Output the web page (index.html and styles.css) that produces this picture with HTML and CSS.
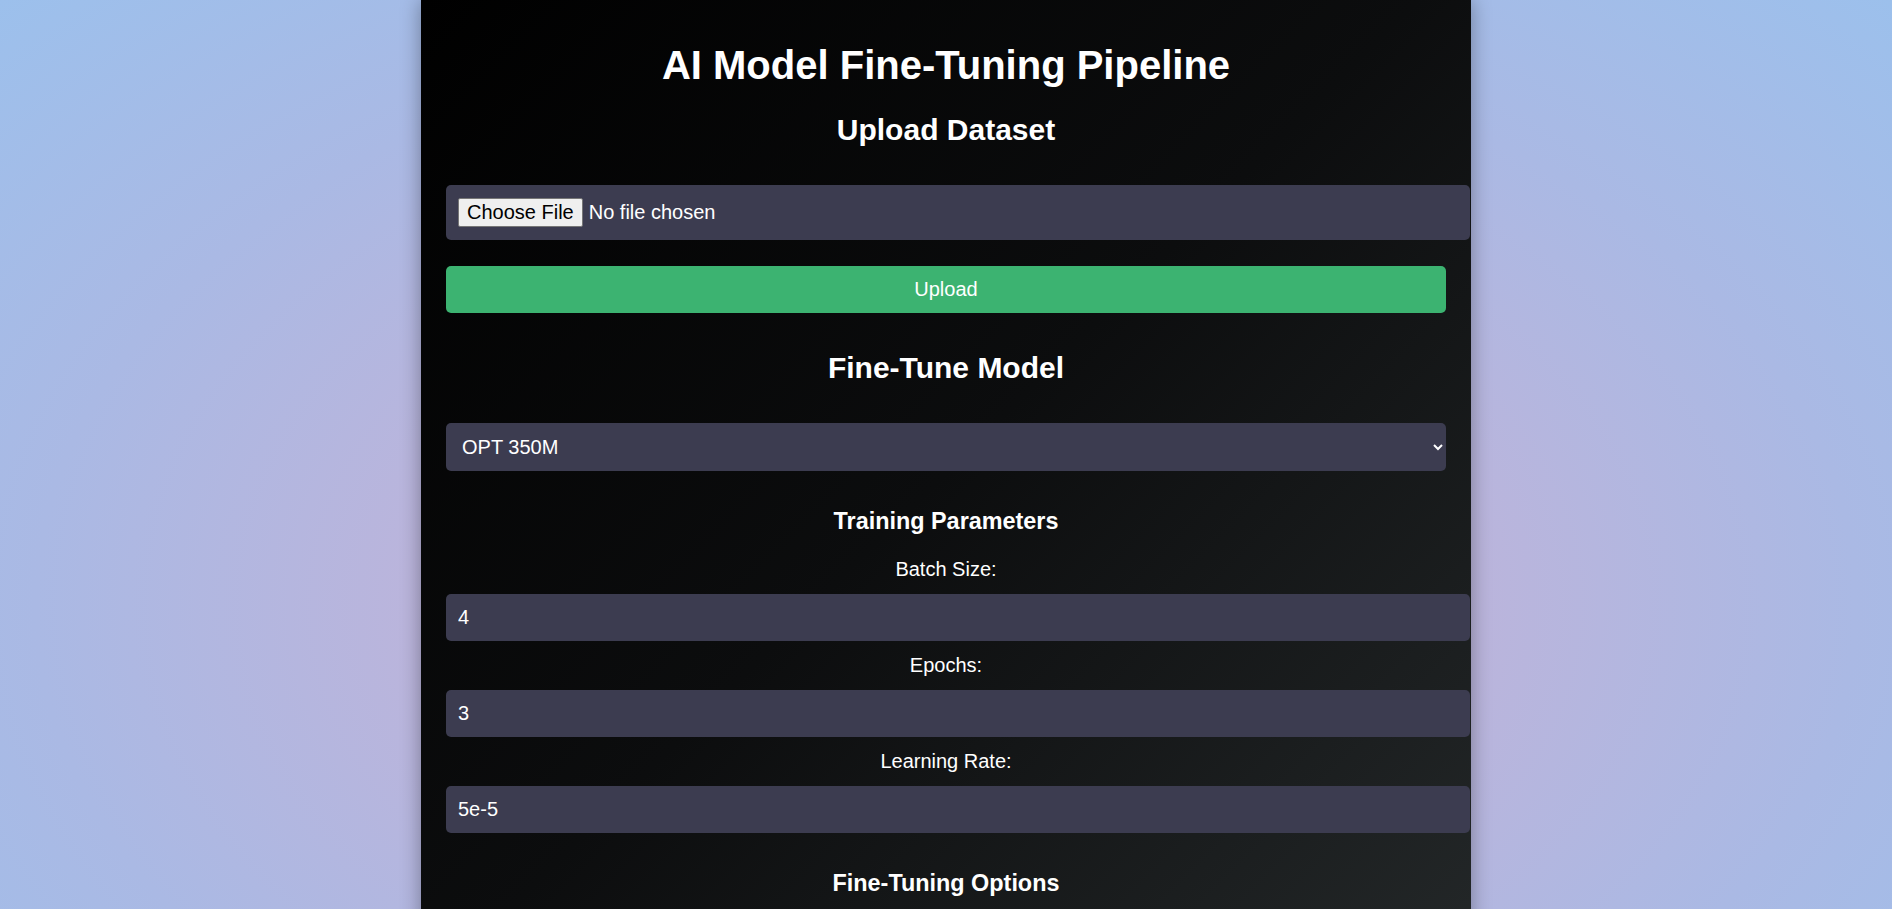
FILE: index.html
```html
<!DOCTYPE html>
<html lang="en">
<head>
<meta charset="UTF-8">
<title>AI Model Fine-Tuning Pipeline</title>
<link rel="stylesheet" href="styles.css">
</head>
<body>
  <div class="container">
    <h1>AI Model Fine-Tuning Pipeline</h1>

    <h2>Upload Dataset</h2>
    <div class="group">
      <input class="control file" type="file">
      <button class="btn" type="button">Upload</button>
    </div>

    <h2>Fine-Tune Model</h2>
    <div class="group">
      <select class="control select">
        <option>OPT 350M</option>
        <option>GPT-2</option>
      </select>
    </div>

    <h3>Training Parameters</h3>
    <div class="group">
      <label class="label" for="batch">Batch Size:</label>
      <input class="control" id="batch" type="number" value="4">
      <label class="label" for="epochs">Epochs:</label>
      <input class="control" id="epochs" type="number" value="3">
      <label class="label" for="lr">Learning Rate:</label>
      <input class="control" id="lr" type="text" value="5e-5">
    </div>

    <h3>Fine-Tuning Options</h3>
  </div>
</body>
</html>
```

FILE: styles.css
```css
html {
  font-family: "Liberation Sans", Arial, sans-serif;
}

body {
  margin: 0;
  font-family: "Liberation Sans", Arial, sans-serif;
  font-size: 20px;
  line-height: 1.15;
  color: #ffffff;
  background: radial-gradient(ellipse at 50% 64%, #c7b1d6 0%, #c0b3d9 30%, #aab9e4 68%, #9cc0ec 100%);
}

.container {
  width: 1000px;
  margin: 0 auto;
  padding: 15px 25px 25px;
  border-radius: 0 0 10px 10px;
  background: linear-gradient(135deg, #000000 0%, #0c0d0e 50%, #232728 100%);
  box-shadow: 0 0 20px rgba(0, 0, 0, 0.35);
  text-align: center;
  overflow: hidden;
}

h1 {
  font-size: 2em;
  margin: 0.67em 0 25px;
}

h2 {
  font-size: 1.5em;
  margin: 0.83em 0;
}

h3 {
  font-size: 1.17em;
  margin: 1em 0;
}

.group {
  display: flex;
  flex-direction: column;
  align-items: flex-start;
}

.control {
  display: block;
  width: 100%;
  margin: 13px 0;
  padding: 12px;
  border: none;
  border-radius: 5px;
  background: #3c3c50;
  color: #ffffff;
  font: inherit;
  line-height: 1.15;
  text-align: left;
  outline: none;
}

.file {
  padding: 13px 12px;
}

.file::file-selector-button {
  font: inherit;
  line-height: 1.15;
  padding: 2px 8px;
  margin: 0 6px 0 0;
  border: 1px solid #767676;
  border-radius: 2px;
  background: #efefef;
  color: #000000;
}

.select {
  box-sizing: border-box;
  padding: 12px;
  height: 48px;
}

.btn {
  display: block;
  width: 100%;
  margin: 13px 0;
  padding: 12px;
  border: none;
  border-radius: 5px;
  background: #3cb371;
  color: #ffffff;
  font: inherit;
  line-height: 1.15;
  cursor: pointer;
}

.label {
  display: block;
  align-self: stretch;
  text-align: center;
}
```
